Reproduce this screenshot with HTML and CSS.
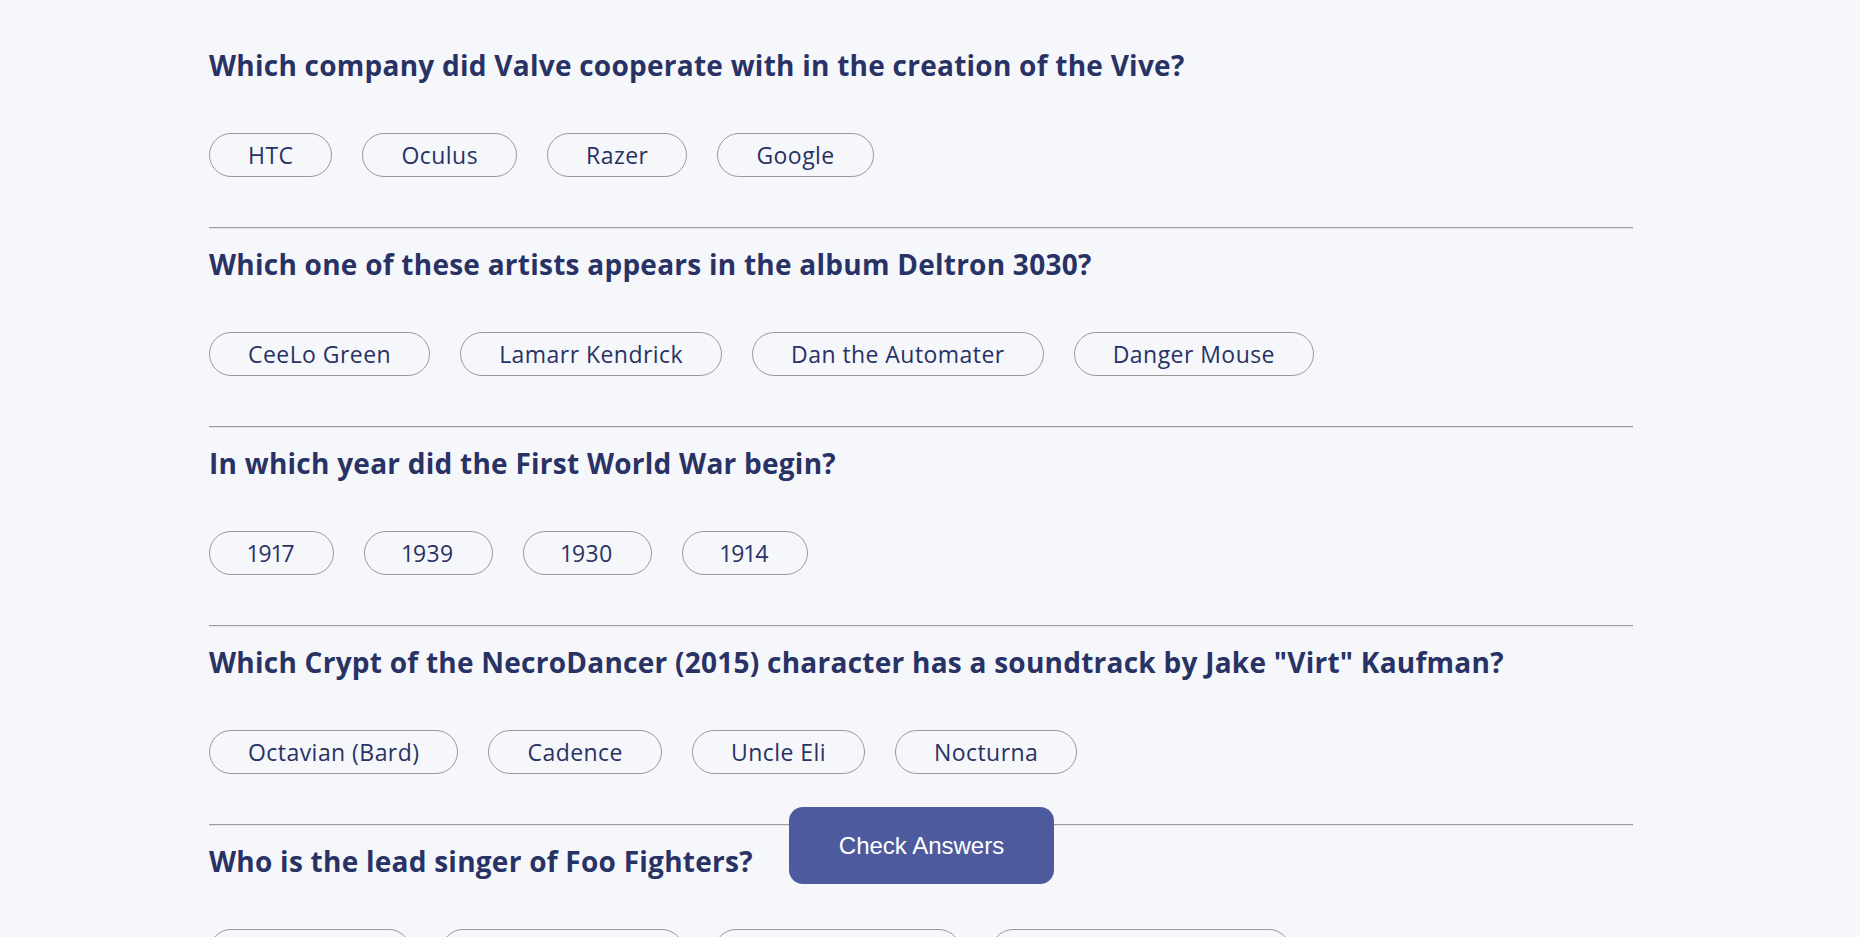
FILE: index.html
```html
<!DOCTYPE html>
<html lang="en">
<head>
<meta charset="utf-8">
<title>Quizzical</title>
<link rel="stylesheet" href="styles.css">
</head>
<body>
<main class="quiz">
  <section class="question">
    <h2 class="question-title">Which company did Valve cooperate with in the creation of the Vive?</h2>
    <div class="answers">
      <button class="answer">HTC</button>
      <button class="answer">Oculus</button>
      <button class="answer">Razer</button>
      <button class="answer">Google</button>
    </div>
  </section>
  <section class="question">
    <h2 class="question-title">Which one of these artists appears in the album Deltron 3030?</h2>
    <div class="answers">
      <button class="answer">CeeLo Green</button>
      <button class="answer">Lamarr Kendrick</button>
      <button class="answer">Dan the Automater</button>
      <button class="answer">Danger Mouse</button>
    </div>
  </section>
  <section class="question">
    <h2 class="question-title">In which year did the First World War begin?</h2>
    <div class="answers">
      <button class="answer">1917</button>
      <button class="answer">1939</button>
      <button class="answer">1930</button>
      <button class="answer">1914</button>
    </div>
  </section>
  <section class="question">
    <h2 class="question-title">Which Crypt of the NecroDancer (2015) character has a soundtrack by Jake "Virt" Kaufman?</h2>
    <div class="answers">
      <button class="answer">Octavian (Bard)</button>
      <button class="answer">Cadence</button>
      <button class="answer">Uncle Eli</button>
      <button class="answer">Nocturna</button>
    </div>
  </section>
  <section class="question">
    <h2 class="question-title">Who is the lead singer of Foo Fighters?</h2>
    <div class="answers">
      <button class="answer">Dave Grohl</button>
      <button class="answer">Dave Mustaine</button>
      <button class="answer">Taylor Hawkins</button>
      <button class="answer">Chester Bennington</button>
    </div>
  </section>
</main>
<button class="check-btn">Check Answers</button>
</body>
</html>
```

FILE: styles.css
```css
* { box-sizing: border-box; }
html, body { margin: 0; padding: 0; }
body {
  background: #F5F7FB;
  font-family: "Open Sans", "Noto Sans", sans-serif;
  color: #293264;
}
.quiz {
  margin-left: 209px;
  width: 1424px;
  padding-top: 29px;
}
.question {
  padding-top: 19px;
  padding-bottom: 50px;
  border-bottom: 1px solid #9d9d9d;
  box-shadow: 0 1px 0 #e4e4e8;
}
.question-title {
  margin: 0 0 51px;
  font-size: 28px;
  font-weight: 700;
  line-height: 34px;
  letter-spacing: 0.25px;
  color: #293264;
}
.answers {
  display: flex;
  gap: 30px;
}
.answer {
  height: 44px;
  padding: 0 38px;
  border: 1px solid #9a9a9a;
  border-radius: 999px;
  background: transparent;
  font-family: "Open Sans", "Noto Sans", sans-serif;
  font-size: 23px;
  letter-spacing: 0.45px;
  font-variant-numeric: proportional-nums;
  color: #293264;
  cursor: pointer;
}
.check-btn {
  position: fixed;
  left: 789px;
  top: 807px;
  width: 265px;
  height: 77px;
  border: none;
  border-radius: 14px;
  background: #4D5B9E;
  color: #fff;
  font-family: "Liberation Sans", Arial, sans-serif;
  font-size: 24px;
  cursor: pointer;
}
```
